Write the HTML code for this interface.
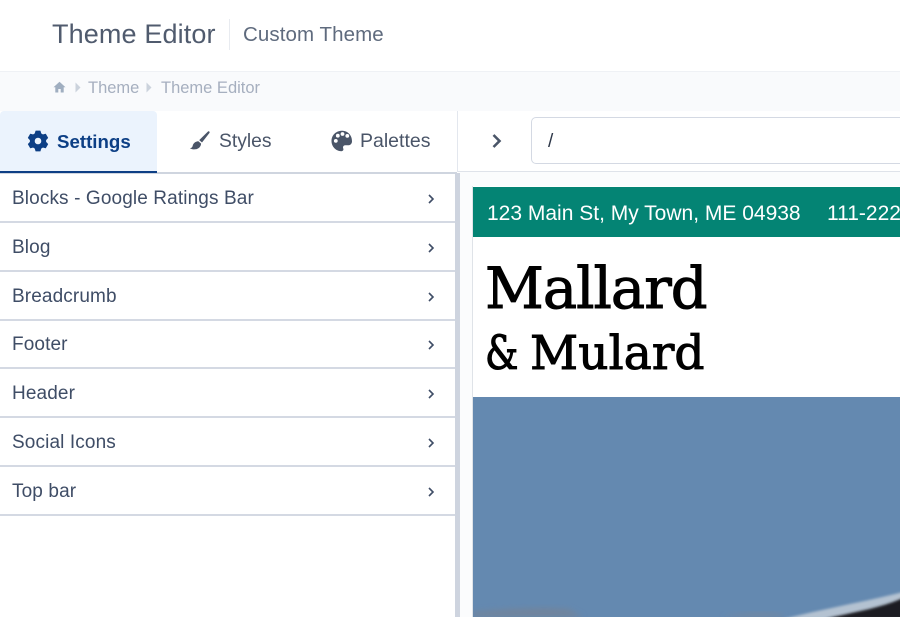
<!DOCTYPE html>
<html>
<head>
<meta charset="utf-8">
<style>
html,body{margin:0;padding:0;background:#fff}
body{width:900px;height:617px;overflow:hidden;position:relative;font-family:"Liberation Sans",sans-serif}
.a{position:absolute;white-space:nowrap}
.row{position:absolute;left:0;width:455px;height:2px;background:#d4d9e3}
.lbl{position:absolute;left:12px;font-size:19px;line-height:24px;color:#3f4d66;white-space:nowrap;letter-spacing:.12px}
.chev{position:absolute;left:427px;width:8px;height:12px}
.slab{font-family:"DejaVu Serif",serif;color:#000;-webkit-text-stroke:1px #000}
</style>
</head>
<body>
<div class="a" style="left:52px;top:17px;font-size:27px;line-height:34px;color:#505b6e;letter-spacing:.13px">Theme Editor</div>
<div class="a" style="left:229px;top:19px;width:1px;height:31px;background:#e8ebf0"></div>
<div class="a" style="left:243px;top:22px;font-size:20.500px;line-height:26px;color:#5f6b7e;letter-spacing:.08px">Custom Theme</div>

<div class="a" style="left:0;top:71px;width:900px;height:40px;background:#f9fafc;border-top:1px solid #eff1f5;box-sizing:border-box"></div>
<svg class="a" style="left:53px;top:81px" width="13" height="12" viewBox="0 0 13 12"><path d="M6.500 .8L.5 6.200h1.800V11.500h3V8h2.400v3.500h3V6.200h1.800z" fill="#a0aec0"/></svg>
<svg class="a" style="left:75px;top:82px" width="6" height="11" viewBox="0 0 6 11"><path d="M.5 .5L5.500 5.500.5 10.500z" fill="#cbd2dc"/></svg>
<div class="a" style="left:88px;top:78px;font-size:16.500px;line-height:21px;color:#a6afbf">Theme</div>
<svg class="a" style="left:146px;top:82px" width="6" height="11" viewBox="0 0 6 11"><path d="M.5 .5L5.500 5.500.5 10.500z" fill="#cbd2dc"/></svg>
<div class="a" style="left:161px;top:78px;font-size:16.500px;line-height:21px;color:#a6afbf">Theme Editor</div>

<div class="a" style="left:0;top:111px;width:157px;height:61px;background:#ebf3fd;border-radius:4px 4px 0 0"></div>
<div class="a" style="left:0;top:172px;width:457px;height:2px;background:#cfd5df"></div>
<div class="a" style="left:0;top:171px;width:157px;height:2px;background:#0d3f85"></div>
<div class="a" style="left:457px;top:111px;width:1px;height:61px;background:#e3e7ee"></div>
<div class="a" style="left:458px;top:171px;width:442px;height:1px;background:#dfe3ea"></div>

<svg class="a" style="left:27px;top:130px" width="22" height="22" viewBox="0 0 22 22"><path fill="#0d3f85" stroke="#0d3f85" stroke-width=".8" stroke-linejoin="round" fill-rule="evenodd" d="M8.880 1.020H13.120L13.920 3.770 15.800 4.850 18.580 4.180 20.700 7.850 18.720 9.920V12.080L20.700 14.150 18.580 17.820 15.800 17.150 13.920 18.230 13.120 20.980H8.880L8.080 18.230 6.200 17.150 3.420 17.820 1.300 14.150 3.280 12.080V9.920L1.300 7.850 3.420 4.180 6.200 4.850 8.080 3.770zM11 7.300a3.700 3.700 0 1 0 0 7.400 3.700 3.700 0 0 0 0-7.400z"/></svg>
<div class="a" style="left:57px;top:129px;font-size:18.700px;line-height:25px;font-weight:700;color:#0d3f85">Settings</div>

<svg class="a" style="left:189px;top:130px" width="22" height="22" viewBox="0 0 22 22"><path fill="#4a5568" d="M19 1.500c.9-.7 2.100.4 1.500 1.400l-7.500 9.600-2.800-2.400zM9.400 11.300l2.700 2.300c-.2 3-2.500 5.300-5.500 5.700-2 .2-4.300-.1-5.600-1.100 1.700-.1 2.300-1 2.700-2.400.5-2.300 2.400-4.300 5.700-4.500z"/></svg>
<div class="a" style="left:219px;top:129px;font-size:19.300px;line-height:25px;color:#4a5568">Styles</div>

<svg class="a" style="left:331px;top:130px" width="22" height="22" viewBox="0 0 22 22"><path fill="#4a5568" fill-rule="evenodd" d="M11 .8C5 .8.500 5.300.5 11s4.600 10.200 9.800 10.200c1.900 0 2.500-1.400 1.900-2.800-.6-1.500.3-3.100 2-3.100h3c2.300 0 3.800-1.800 3.800-4.100C21 5 16.500.8 11 .8zM4.800 12.800a1.900 1.900 0 1 1 0-3.800 1.900 1.900 0 0 1 0 3.800zM6.800 7.600a1.900 1.900 0 1 1 0-3.800 1.900 1.900 0 0 1 0 3.800zM11.500 5.900a1.900 1.900 0 1 1 0-3.800 1.900 1.900 0 0 1 0 3.800zM16.300 7.800a1.900 1.900 0 1 1 0-3.800 1.900 1.900 0 0 1 0 3.800z"/></svg>
<div class="a" style="left:360px;top:129px;font-size:19.500px;line-height:25px;color:#4a5568">Palettes</div>

<svg class="a" style="left:491px;top:133px" width="12" height="16" viewBox="0 0 12 16"><path d="M2.500 2l6 6-6 6" fill="none" stroke="#4a5568" stroke-width="2.600"/></svg>
<div class="a" style="left:531px;top:117px;width:400px;height:47px;box-sizing:border-box;border:1px solid #d4d9e3;border-radius:5px;background:#fff"></div>
<div class="a" style="left:548px;top:129px;font-size:19px;line-height:25px;color:#2d3748">/</div>

<div class="lbl" style="top:187px">Blocks - Google Ratings Bar</div>
<div class="row" style="top:221px"></div>
<div class="lbl" style="top:236px">Blog</div>
<div class="row" style="top:270px"></div>
<div class="lbl" style="top:285px">Breadcrumb</div>
<div class="row" style="top:319px"></div>
<div class="lbl" style="top:333px">Footer</div>
<div class="row" style="top:367px"></div>
<div class="lbl" style="top:382px">Header</div>
<div class="row" style="top:416px"></div>
<div class="lbl" style="top:431px">Social Icons</div>
<div class="row" style="top:465px"></div>
<div class="lbl" style="top:480px">Top bar</div>
<div class="row" style="top:514px"></div>

<svg class="chev" style="top:193px" viewBox="0 0 8 12"><path d="M2 2l4 4-4 4" fill="none" stroke="#3f4d66" stroke-width="1.600"/></svg>
<svg class="chev" style="top:242px" viewBox="0 0 8 12"><path d="M2 2l4 4-4 4" fill="none" stroke="#3f4d66" stroke-width="1.600"/></svg>
<svg class="chev" style="top:291px" viewBox="0 0 8 12"><path d="M2 2l4 4-4 4" fill="none" stroke="#3f4d66" stroke-width="1.600"/></svg>
<svg class="chev" style="top:339px" viewBox="0 0 8 12"><path d="M2 2l4 4-4 4" fill="none" stroke="#3f4d66" stroke-width="1.600"/></svg>
<svg class="chev" style="top:388px" viewBox="0 0 8 12"><path d="M2 2l4 4-4 4" fill="none" stroke="#3f4d66" stroke-width="1.600"/></svg>
<svg class="chev" style="top:437px" viewBox="0 0 8 12"><path d="M2 2l4 4-4 4" fill="none" stroke="#3f4d66" stroke-width="1.600"/></svg>
<svg class="chev" style="top:486px" viewBox="0 0 8 12"><path d="M2 2l4 4-4 4" fill="none" stroke="#3f4d66" stroke-width="1.600"/></svg>

<div class="a" style="left:455px;top:173px;width:5px;height:444px;background:#ced4df"></div>
<div class="a" style="left:460px;top:172px;width:440px;height:445px;background:#fbfcfd"></div>
<div class="a" style="left:472px;top:186px;width:428px;height:431px;background:#fff;border-left:1px solid #dfe3e8;box-sizing:border-box"></div>

<div class="a" style="left:473px;top:187px;width:427px;height:50px;background:#048474"></div>
<div class="a" style="left:487px;top:200px;font-size:21px;line-height:27px;color:#fff">123 Main St, My Town, ME 04938</div>
<div class="a" style="left:827px;top:200px;font-size:21px;line-height:27px;color:#fff">111-2222</div>

<div class="a slab" style="left:485px;top:254px;font-size:57.500px;line-height:70px;letter-spacing:-1px">Mallard</div>
<div class="a slab" style="left:485px;top:324px;font-size:47px;line-height:60px;transform-origin:0 0;transform:scaleX(.8)">&amp;</div>
<div class="a slab" style="left:530px;top:324px;font-size:47px;line-height:60px;letter-spacing:.1px">Mulard</div>

<svg class="a" style="left:473px;top:397px" width="427" height="220" viewBox="0 0 427 220">
<defs><filter id="b" x="-10%" y="-50%" width="120%" height="200%"><feGaussianBlur stdDeviation="1.200"/></filter><filter id="c" x="-10%" y="-50%" width="120%" height="200%"><feGaussianBlur stdDeviation="3"/></filter></defs>
<rect width="427" height="220" fill="#6489b0"/>
<path d="M0 220V215C30 212 65 210 95 212L110 220z" fill="#71849c" filter="url(#c)"/>
<path d="M250 220C270 216 290 215 310 218V220z" fill="#75879e" filter="url(#c)"/>
<path d="M310 222C350 212 390 205 430 195V222z" fill="#b4c2d1" filter="url(#b)"/>
<path d="M352 222C380 215 405 212 430 201V222z" fill="#1f1f22" filter="url(#b)"/>
</svg>
</body>
</html>
